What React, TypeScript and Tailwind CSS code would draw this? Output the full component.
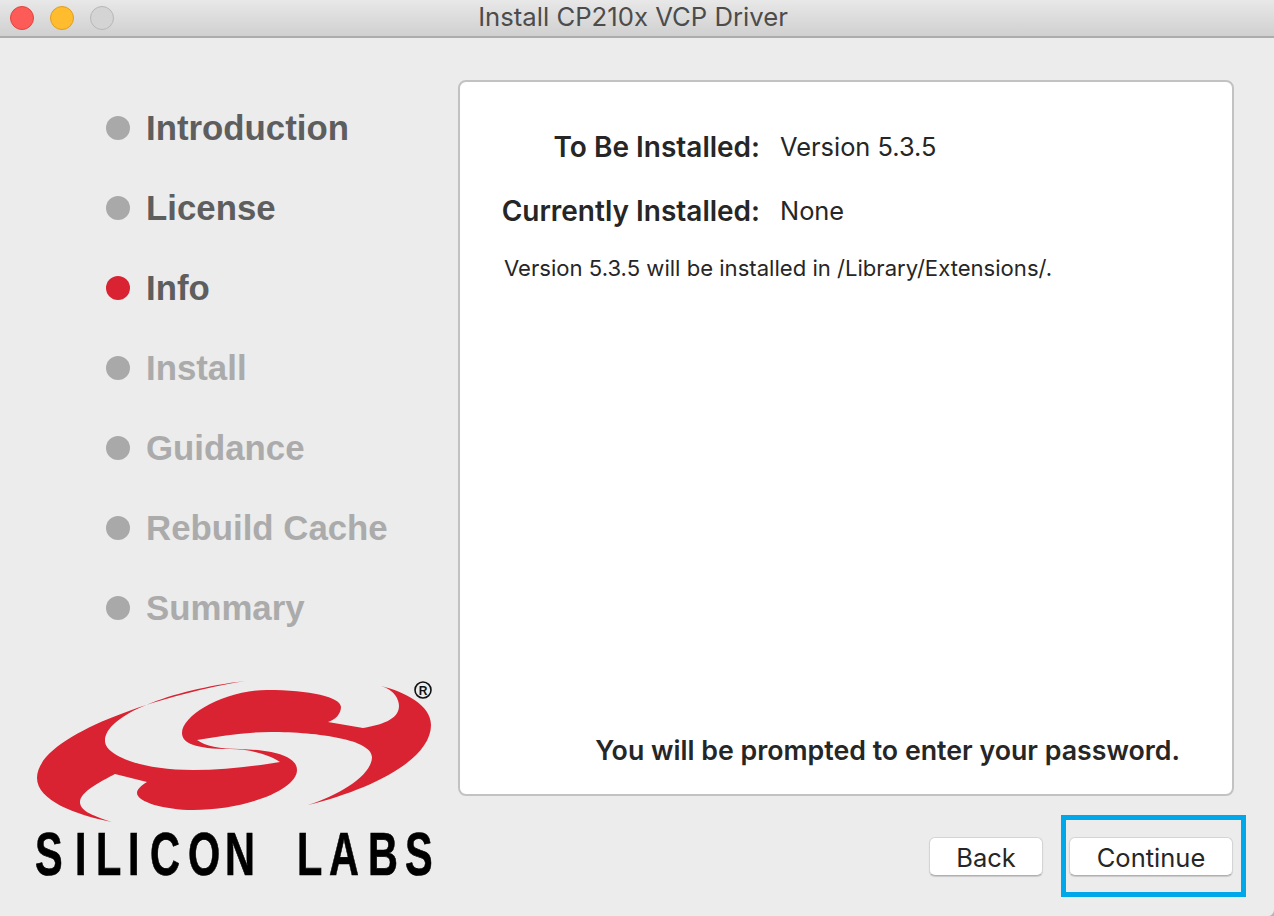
const steps = [
  { label: "Introduction", state: "done" },
  { label: "License", state: "done" },
  { label: "Info", state: "active" },
  { label: "Install", state: "todo" },
  { label: "Guidance", state: "todo" },
  { label: "Rebuild Cache", state: "todo" },
  { label: "Summary", state: "todo" },
];

function Logo() {
  const swoosh =
    "M245 681C160 695 37 735 37 778C37 800 75 815 112 822C90 815 80 810 80 802C80 792 100 782 115 774L147 782C140 786 137 790 137 793C137 802 165 810 193 810C245 810 297 790 297 770C297 755 270 750 240 749C220 749 205 746 197 740C220 736 245 732 270 732C320 732 372 740 372 757C372 775 340 795 308 805C370 790 431 760 431 725C431 705 405 692 381 686C395 690 399 700 399 706C399 720 380 725 363 728L328 722C335 720 341 714 341 707C341 697 310 690 267 690C225 690 182 715 182 733C182 743 195 749 230 749C250 749 270 755 280 762C255 766 225 770 193 770C140 770 105 755 105 741C105 715 170 690 245 681Z";
  const xs = [35, 75, 96, 128, 150, 188, 225, 275, 297, 329, 368, 405].map((x) => x / 0.68);
  return (
    <svg viewBox="0 670 459 220" className="block w-[459px] h-[220px]">
      <path d={swoosh} fill="#d92332" />
      <circle cx="423" cy="690" r="8" fill="none" stroke="#111" strokeWidth="1.6" />
      <text x="423" y="694.5" textAnchor="middle" fontSize="12" fontWeight="700" fill="#111" fontFamily="Liberation Sans, sans-serif">
        R
      </text>
      <text
        x={xs.join(" ")}
        y="875"
        transform="scale(0.68 1)"
        fontSize="61"
        fontWeight="700"
        fill="#000"
        stroke="#000"
        strokeWidth="0.7"
        fontFamily="Liberation Sans, sans-serif"
      >
        SILICON LABS
      </text>
    </svg>
  );
}

export default function App() {
  return (
    <div className="bg-[#b5b5b5]">
      <div className="relative w-full h-[916px] flex flex-col bg-[#ececec] rounded-br-[6px] overflow-hidden font-['Inter',sans-serif] text-[#262626]">
        <header className="h-[38px] shrink-0 flex items-center relative bg-gradient-to-b from-[#e8e8e8] to-[#d0d0d0] border-b-2 border-[#acacac]">
          <div className="flex items-center gap-4 pl-[10px]">
            <span className="w-6 h-6 rounded-full bg-[#fc5b57] border border-[#e1443f]" />
            <span className="w-6 h-6 rounded-full bg-[#ffbc2e] border border-[#e09e1f]" />
            <span className="w-6 h-6 rounded-full bg-[#d4d4d4] border border-[#b7b7b7]" />
          </div>
          <h1 className="absolute inset-x-0 top-0 text-center text-[25.7px] leading-[34px] text-[#4c4c4c] font-normal pr-2">
            Install CP210x VCP Driver
          </h1>
        </header>

        <div className="flex flex-1 min-h-0">
          <aside className="w-[458px] shrink-0 flex flex-col pt-[50px]">
            <ul className="pl-[106px]">
              {steps.map((s) => (
                <li key={s.label} className="h-20 flex items-center gap-4">
                  <span className={s.state === "active" ? "w-6 h-6 rounded-full bg-[#d92332]" : "w-6 h-6 rounded-full bg-[#a9a9a9]"} />
                  <span
                    className={
                      s.state === "todo"
                        ? "pt-px font-['Liberation_Sans',sans-serif] font-bold text-[34.8px] text-[#ababab]"
                        : "pt-px font-['Liberation_Sans',sans-serif] font-bold text-[34.8px] text-[#5e5e5e]"
                    }
                  >
                    {s.label}
                  </span>
                </li>
              ))}
            </ul>
            <div className="mt-[22px]">
              <Logo />
            </div>
          </aside>

          <main className="flex-1 flex flex-col pt-[42px] pr-[40px]">
            <section className="h-[716px] flex flex-col bg-white border-2 border-[#c2c2c2] rounded-lg">
              <div className="pt-[33px]">
                <div className="h-16 flex items-center">
                  <span className="w-[300px] text-right text-[28px] font-semibold">To Be Installed:</span>
                  <span className="ml-5 text-[25.4px] pt-px">Version 5.3.5</span>
                </div>
                <div className="h-16 flex items-center">
                  <span className="w-[300px] text-right text-[28px] font-semibold">Currently Installed:</span>
                  <span className="ml-5 text-[25.4px] pt-px">None</span>
                </div>
                <p className="h-[52px] flex items-center pl-[44px] text-[22.1px]">
                  Version 5.3.5 will be installed in /Library/Extensions/.
                </p>
              </div>
              <p className="mt-auto pb-[28px] pr-[52px] text-right text-[26.75px] leading-8 font-semibold">
                You will be prompted to enter your password.
              </p>
            </section>

            <div className="mt-[41px] flex justify-end gap-[26px] pr-px">
              <button className="w-[114px] h-[39px] pt-[3px] bg-white rounded-md border border-[#d4d4d4] border-b-[#b0b0b0] text-[25.5px] leading-none shadow-[0_1px_1px_rgba(0,0,0,0.15)]">
                Back
              </button>
              <button className="w-[164px] h-[39px] pt-[3px] bg-white rounded-md border border-[#d4d4d4] border-b-[#b0b0b0] text-[25.5px] leading-none shadow-[0_1px_1px_rgba(0,0,0,0.15)]">
                Continue
              </button>
            </div>
          </main>
        </div>

        <div className="absolute left-[1061px] top-[815px] w-[185px] h-[82px] border-[5px] border-[#00a7e9]" />
      </div>
    </div>
  );
}
